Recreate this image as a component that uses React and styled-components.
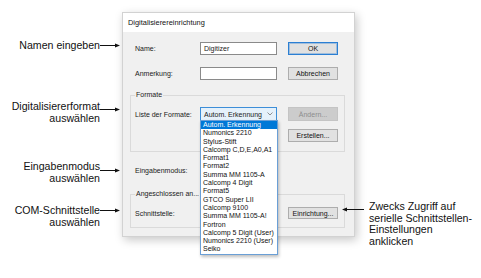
import styled, { createGlobalStyle } from "styled-components";

const GlobalStyle = createGlobalStyle`
  html, body {
    margin: 0;
    background: #ffffff;
  }
  body {
    font-family: "Liberation Sans", Arial, sans-serif;
    color: #000000;
  }
`;

const Figure = styled.div`
  display: flex;
  align-items: flex-start;
  width: 481px;
  height: 278px;
  overflow: hidden;
`;

const LeftNotes = styled.div`
  display: flex;
  flex-direction: column;
  flex-shrink: 0;
  width: 122px;
  padding-top: 39px;
`;

const Note = styled.div`
  display: flex;
  align-items: flex-start;
  margin-top: ${({ $gap }) => $gap || 0}px;
`;

const NoteText = styled.div`
  width: 100px;
  text-align: right;
  font-size: 10.6px;
  line-height: 12px;
  color: #111111;
  white-space: nowrap;
`;

const RightNote = styled.div`
  display: flex;
  align-items: flex-start;
  margin-left: -13px;
  padding-top: 201px;
  position: relative;
  z-index: 2;
`;

const RightText = styled.div`
  margin-left: 5px;
  font-size: 10.6px;
  line-height: 11.7px;
  color: #111111;
  white-space: nowrap;
`;

const ArrowSvg = styled.svg`
  flex-shrink: 0;
  display: block;
  margin-top: ${({ $drop }) => $drop}px;
`;

const Arrow = ({ drop, left }) => (
  <ArrowSvg $drop={drop} width="22" height="7" viewBox="0 0 22 7">
    {left ? (
      <>
        <line x1="3" y1="3.5" x2="22" y2="3.5" stroke="#111" strokeWidth="1" />
        <polygon points="0,3.5 5,1.5 5,5.5" fill="#111" />
      </>
    ) : (
      <>
        <line x1="0" y1="3.5" x2="17" y2="3.5" stroke="#111" strokeWidth="1" />
        <polygon points="20,3.5 15,1.5 15,5.5" fill="#111" />
      </>
    )}
  </ArrowSvg>
);

const Dialog = styled.div`
  position: relative;
  flex-shrink: 0;
  margin-top: 12px;
  width: 233px;
  height: 225px;
  box-sizing: border-box;
  border: 1px solid #d2d2d2;
  background: #f0f0f0;
  box-shadow: 2px 3px 9px rgba(0, 0, 0, 0.22);
  display: flex;
  flex-direction: column;
  font-size: 7px;
  color: #1a1a1a;
`;

const TitleBar = styled.div`
  height: 19px;
  background: #ffffff;
  padding-left: 5px;
  display: flex;
  align-items: center;
  font-size: 7.4px;
  color: #111111;
`;

const Body = styled.div`
  display: flex;
  flex-direction: column;
  padding: 10px 0 0 12px;
`;

const Row = styled.div`
  display: grid;
  grid-template-columns: 54px 77px 50px;
  column-gap: 11px;
  align-items: center;
  height: ${({ $h }) => $h || 13}px;
  margin-top: ${({ $gap }) => $gap || 0}px;
`;

const Label = styled.span`
  white-space: nowrap;
`;

const Input = styled.div`
  height: 13px;
  box-sizing: border-box;
  border: 1px solid #8a8a8a;
  background: #ffffff;
  padding-left: 3px;
  display: flex;
  align-items: center;
`;

const Button = styled.div`
  width: 50px;
  height: ${({ $h }) => $h || 13}px;
  box-sizing: border-box;
  display: flex;
  align-items: center;
  justify-content: center;
  background: ${({ $disabled }) => ($disabled ? "#cccccc" : "#e1e1e1")};
  border: 1px solid
    ${({ $primary, $disabled }) =>
      $primary ? "#2b7fd3" : $disabled ? "#c4c4c4" : "#adadad"};
  box-shadow: ${({ $primary }) =>
    $primary ? "inset 0 0 0 1px rgba(43, 127, 211, 0.35)" : "none"};
  color: ${({ $disabled }) => ($disabled ? "#8c8c8c" : "#111111")};
  white-space: nowrap;
`;

const Group = styled.fieldset`
  margin: ${({ $gap }) => $gap}px 0 0 -5px;
  width: 215px;
  box-sizing: border-box;
  min-width: 0;
  border: 1px solid #dadada;
  padding: ${({ $top }) => $top}px 0 ${({ $bottom }) => $bottom}px 4px;
`;

const Legend = styled.legend`
  padding: 0 1px;
  font-size: 7px;
  line-height: 10px;
  color: #1a1a1a;
  white-space: nowrap;
`;

const Combo = styled.div`
  position: relative;
  height: 14px;
  box-sizing: border-box;
  border: 1px solid #3d8ed8;
  background: #e5f1fb;
  padding: 0 3px 0 3px;
  display: flex;
  align-items: center;
  justify-content: space-between;
  white-space: nowrap;
`;

const PlainCombo = styled.div`
  height: 13px;
  box-sizing: border-box;
  border: 1px solid #adadad;
  background: #e1e1e1;
`;

const List = styled.ul`
  position: absolute;
  top: 100%;
  left: -1px;
  width: 78px;
  box-sizing: border-box;
  margin: 0;
  padding: 0;
  list-style: none;
  background: #ffffff;
  border: 1px solid #6a9fd6;
  box-shadow: 1px 2px 3px rgba(0, 0, 0, 0.25);
  z-index: 3;
`;

const Item = styled.li`
  height: 8.3px;
  line-height: 8.3px;
  padding-left: 2px;
  font-size: 7px;
  white-space: nowrap;
  background: ${({ $active }) => ($active ? "#0078d7" : "transparent")};
  color: ${({ $active }) => ($active ? "#ffffff" : "#111111")};
`;

const Chevron = () => (
  <svg width="6" height="4" viewBox="0 0 6 4">
    <polyline points="0.5,0.5 3,3 5.5,0.5" fill="none" stroke="#777" strokeWidth="0.8" />
  </svg>
);

const formats = [
  "Autom. Erkennung",
  "Numonics 2210",
  "Stylus-Stift",
  "Calcomp C,D,E,A0,A1",
  "Format1",
  "Format2",
  "Summa MM 1105-A",
  "Calcomp 4 Digit",
  "Format5",
  "GTCO Super LII",
  "Calcomp 9100",
  "Summa MM 1105-A!",
  "Fortron",
  "Calcomp 5 Digit (User)",
  "Numonics 2210 (User)",
  "Seiko",
];

const App = () => {
  return (
    <>
      <GlobalStyle />
      <Figure>
        <LeftNotes>
          <Note>
            <NoteText>Namen eingeben</NoteText>
            <Arrow drop={3} />
          </Note>
          <Note $gap={49}>
            <NoteText>
              Digitalisiererformat
              <br />
              auswählen
            </NoteText>
            <Arrow drop={6} />
          </Note>
          <Note $gap={36}>
            <NoteText>
              Eingabenmodus
              <br />
              auswählen
            </NoteText>
            <Arrow drop={7} />
          </Note>
          <Note $gap={20}>
            <NoteText>
              COM-Schnittstelle
              <br />
              auswählen
            </NoteText>
            <Arrow drop={3} />
          </Note>
        </LeftNotes>

        <Dialog>
          <TitleBar>Digitalisierereinrichtung</TitleBar>
          <Body>
            <Row>
              <Label>Name:</Label>
              <Input>Digitizer</Input>
              <Button $primary>OK</Button>
            </Row>
            <Row $gap={12}>
              <Label>Anmerkung:</Label>
              <Input />
              <Button>Abbrechen</Button>
            </Row>

            <Group $gap={10} $top={7} $bottom={9}>
              <Legend>Formate</Legend>
              <Row $h={14}>
                <Label>Liste der Formate:</Label>
                <Combo>
                  Autom. Erkennung
                  <Chevron />
                  <List>
                    {formats.map((f, i) => (
                      <Item key={f} $active={i === 0}>
                        {f}
                      </Item>
                    ))}
                  </List>
                </Combo>
                <Button $h={14} $disabled>
                  Ändern...
                </Button>
              </Row>
              <Row $gap={8}>
                <span />
                <span />
                <Button>Erstellen...</Button>
              </Row>
            </Group>

            <Row $gap={12}>
              <Label>Eingabenmodus:</Label>
              <PlainCombo />
              <span />
            </Row>

            <Group $gap={12} $top={8} $bottom={8}>
              <Legend>Angeschlossen an...</Legend>
              <Row $h={12}>
                <Label>Schnittstelle:</Label>
                <span />
                <Button $h={12}>Einrichtung...</Button>
              </Row>
            </Group>
          </Body>
        </Dialog>

        <RightNote>
          <Arrow left drop={5} />
          <RightText>
            Zwecks Zugriff auf
            <br />
            serielle Schnittstellen-
            <br />
            Einstellungen
            <br />
            anklicken
          </RightText>
        </RightNote>
      </Figure>
    </>
  );
};

export default App;
